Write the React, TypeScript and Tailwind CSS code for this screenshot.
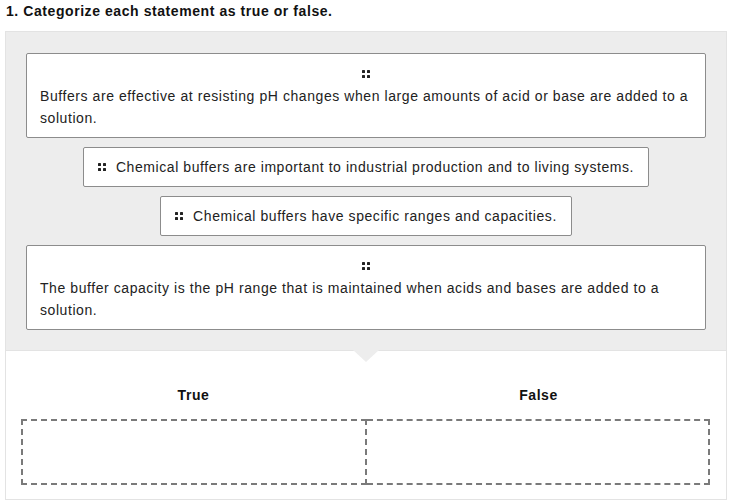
import React from "react";

type Statement = {
  id: number;
  text: string;
  wide: boolean;
};

const statements: Statement[] = [
  {
    id: 1,
    text: "Buffers are effective at resisting pH changes when large amounts of acid or base are added to a solution.",
    wide: true,
  },
  { id: 2, text: "Chemical buffers are important to industrial production and to living systems.", wide: false },
  { id: 3, text: "Chemical buffers have specific ranges and capacities.", wide: false },
  {
    id: 4,
    text: "The buffer capacity is the pH range that is maintained when acids and bases are added to a solution.",
    wide: true,
  },
];

function Grip() {
  return (
    <svg aria-hidden="true" className="h-2 w-2 shrink-0" viewBox="0 0 8 8" fill="#222">
      <rect x="0" y="0" width="3" height="3" rx="0.6" />
      <rect x="5" y="0" width="3" height="3" rx="0.6" />
      <rect x="0" y="5" width="3" height="3" rx="0.6" />
      <rect x="5" y="5" width="3" height="3" rx="0.6" />
    </svg>
  );
}

function StatementCard({ item }: { item: Statement }) {
  if (item.wide) {
    return (
      <div className="w-[680px] rounded-[2px] border border-[#8c8c8c] bg-white px-[13px] pb-2 pt-[9px]">
        <div className="flex h-[22px] items-center justify-center">
          <Grip />
        </div>
        <p className="leading-[22px]">{item.text}</p>
      </div>
    );
  }
  return (
    <div className="flex items-center gap-[10px] rounded-[2px] border border-[#8c8c8c] bg-white px-[14px] py-2">
      <Grip />
      <span className="leading-[22px]">{item.text}</span>
    </div>
  );
}

export default function App() {
  return (
    <main
      className="h-[504px] w-[732px] bg-white text-[14px] tracking-[0.57px] text-[#222]"
      style={{ fontFamily: '"Liberation Sans", Arial, sans-serif' }}
    >
      <h1 className="px-[6px] pt-[3px] text-[14px] font-bold leading-[17px] text-[#111]">
        1. Categorize each statement as true or false.
      </h1>

      <section className="mx-[5px] mt-[11px]">
        <div className="relative border border-[#e3e3e3] bg-[#ededed] pb-5 pt-[21px]">
          <div className="flex flex-col items-center gap-[9px]">
            {statements.map((item) => (
              <StatementCard item={item} key={item.id} />
            ))}
          </div>
          <span className="absolute left-1/2 top-full h-0 w-0 -translate-x-1/2 border-x-[13px] border-t-[12px] border-x-transparent border-t-[#ededed]" />
        </div>

        <div className="border-x border-b border-[#e3e3e3] bg-white px-[15px] pb-[14px] pt-[35px]">
          <div className="grid grid-cols-2">
            <h2 className="text-center font-bold leading-[18px] text-[#111]">True</h2>
            <h2 className="text-center font-bold leading-[18px] text-[#111]">False</h2>
          </div>
          <div className="mt-[15px] grid grid-cols-[346px_1fr] pr-[1px]">
            <div className="h-[66px] border-2 border-dashed border-[#7a7a7a]" />
            <div className="h-[66px] border-2 border-l-0 border-dashed border-[#7a7a7a]" />
          </div>
        </div>
      </section>
    </main>
  );
}
